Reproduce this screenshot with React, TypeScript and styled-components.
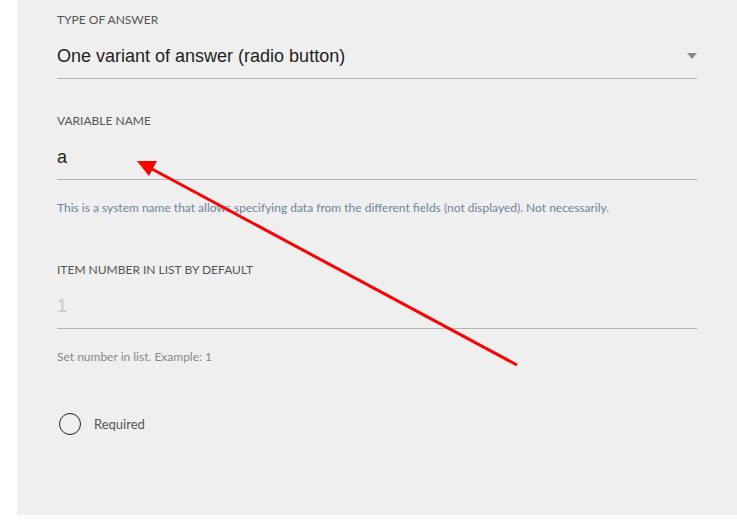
import React from "react";
import styled, { createGlobalStyle } from "styled-components";

const GlobalStyle = createGlobalStyle`
  html, body {
    margin: 0;
    padding: 0;
    background: #ffffff;
  }
`;

const Page = styled.div`
  position: relative;
  width: 737px;
  height: 521px;
  display: flex;
  align-items: flex-start;
  overflow: hidden;
`;

const Gutter = styled.div`
  width: 17px;
  flex-shrink: 0;
`;

const Panel = styled.div`
  flex: 1;
  height: 515px;
  background: #efefef;
  padding: 10px 40px 0 40px;
  box-sizing: border-box;
  display: flex;
  flex-direction: column;
  font-family: Lato, "Open Sans", sans-serif;
`;

const Field = styled.div<{ $gap?: number }>`
  display: flex;
  flex-direction: column;
  margin-top: ${(p) => p.$gap ?? 0}px;
`;

const Label = styled.div`
  margin-top: 2px;
  font-size: 12px;
  line-height: 16px;
  color: #555;
  text-transform: uppercase;
  font-weight: 400;
`;

const InputRow = styled.div`
  display: flex;
  align-items: center;
  justify-content: space-between;
  padding: 18px 0 12px 0;
  border-bottom: 1px solid #b4b4b4;
`;

const Value = styled.span<{ $placeholder?: boolean }>`
  font-family: "Liberation Sans", Arial, sans-serif;
  font-size: 18px;
  line-height: 20px;
  color: ${(p) => (p.$placeholder ? "#c8c8c8" : "#1e1e1e")};
`;

const Caret = styled.span`
  width: 0;
  height: 0;
  border-left: 5px solid transparent;
  border-right: 5px solid transparent;
  border-top: 6px solid #8a8a8a;
`;

const Helper = styled.div<{ $tone?: "blue" | "grey" }>`
  margin-top: 20px;
  font-size: 12px;
  line-height: 16px;
  color: ${(p) => (p.$tone === "blue" ? "#6e8499" : "#888")};
`;

const CheckRow = styled.label`
  display: flex;
  align-items: center;
  gap: 13px;
  margin-top: 48px;
  padding-left: 2px;
`;

const Circle = styled.span`
  width: 20px;
  height: 20px;
  border-radius: 50%;
  border: 1.5px solid #222;
`;

const CheckText = styled.span`
  font-size: 13px;
  color: #555;
`;

const Overlay = styled.svg`
  position: absolute;
  left: 0;
  top: 0;
  pointer-events: none;
`;

export default function App() {
  return (
    <>
      <GlobalStyle />
      <Page>
        <Gutter />
        <Panel>
          <Field>
            <Label>Type of answer</Label>
            <InputRow>
              <Value>One variant of answer (radio button)</Value>
              <Caret />
            </InputRow>
          </Field>
          <Field $gap={32}>
            <Label>Variable name</Label>
            <InputRow>
              <Value>a</Value>
            </InputRow>
            <Helper $tone="blue">
              This is a system name that allows specifying data from the different fields (not displayed). Not necessarily.
            </Helper>
          </Field>
          <Field $gap={44}>
            <Label>Item number in list by default</Label>
            <InputRow>
              <Value $placeholder>1</Value>
            </InputRow>
            <Helper>Set number in list. Example: 1</Helper>
          </Field>
          <CheckRow>
            <Circle />
            <CheckText>Required</CheckText>
          </CheckRow>
        </Panel>
        <Overlay width="737" height="521" viewBox="0 0 737 521">
          <line x1="517" y1="365" x2="152" y2="169" stroke="#ff0000" strokeWidth="3" />
          <polygon points="137,161 157,161 149,176" fill="#ff0000" />
        </Overlay>
      </Page>
    </>
  );
}
